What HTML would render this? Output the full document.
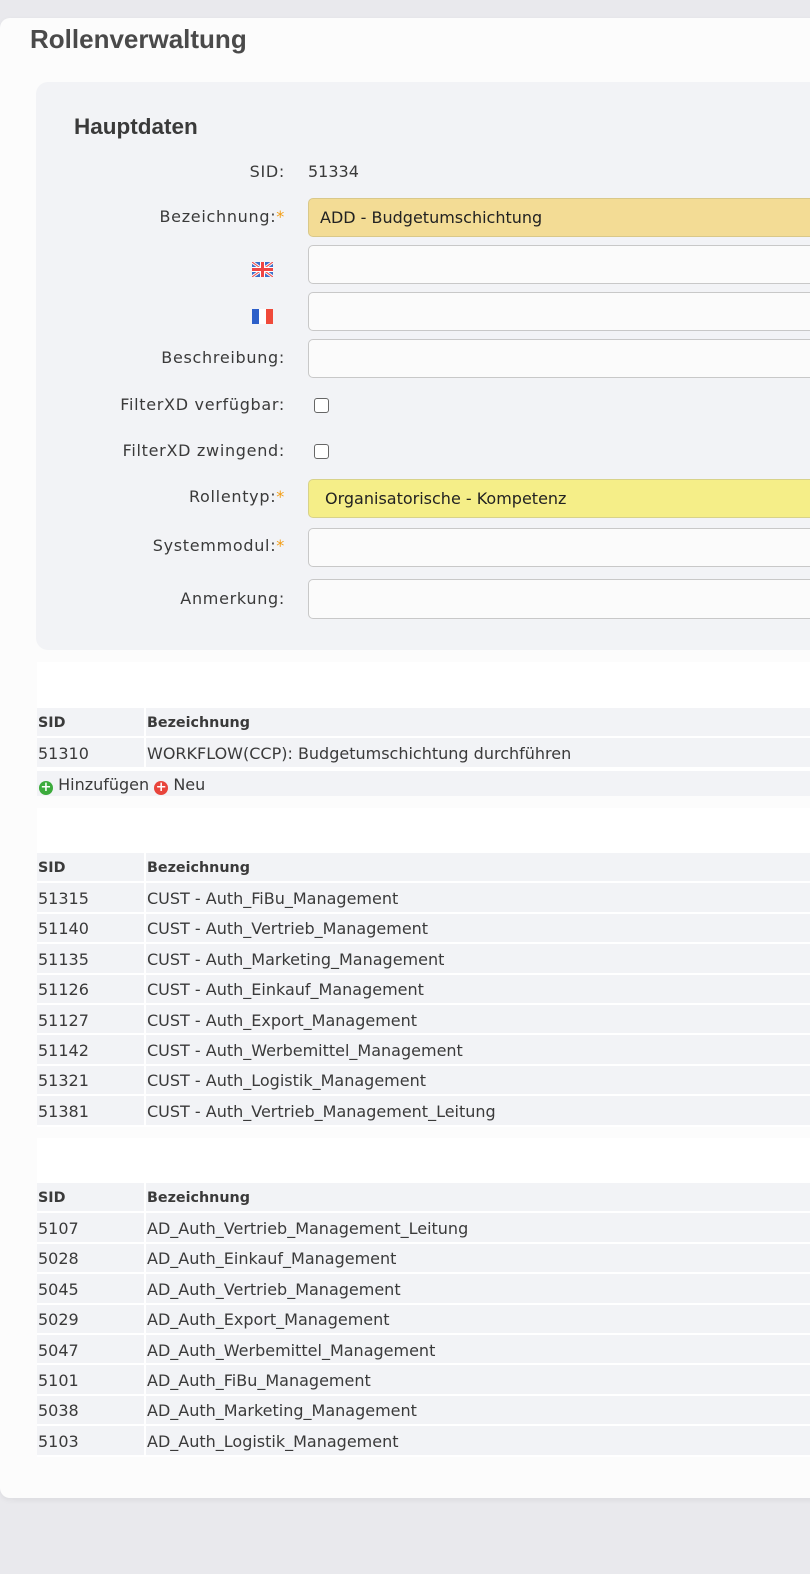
<!DOCTYPE html>
<html><head><meta charset="utf-8"><style>
*{box-sizing:border-box;margin:0;padding:0}
body{width:810px;height:1574px;background:#e9e9ed;font-family:"DejaVu Sans","Liberation Sans",sans-serif;color:#3a3a3a;position:relative;overflow:hidden}
.card{position:absolute;left:0;top:18px;width:830px;height:1480px;background:#fcfcfc;border-radius:10px;box-shadow:0 2px 6px rgba(0,0,0,.06)}
h1{position:absolute;left:30px;top:24px;font-family:"Liberation Sans",sans-serif;font-weight:bold;font-size:26px;color:#4a4a4a}
.panel{position:absolute;left:36px;top:82px;width:800px;height:568px;background:#f2f3f6;border-radius:12px}
h2{position:absolute;left:74px;top:114px;font-family:"Liberation Sans",sans-serif;font-weight:bold;font-size:22.5px;color:#3a3a3a}
.lbl{position:absolute;right:525px;font-size:16px;letter-spacing:0.7px;color:#3a3a3a;white-space:nowrap;line-height:20px}
.req{color:#f39c12}
.inp{position:absolute;left:308px;width:520px;height:39px;border:1.5px solid #c8c8c8;border-radius:5px;background:#fbfbfb;font-size:16px;line-height:37px;padding-left:11px;color:#222}
.cb{position:absolute;left:314px;width:15px;height:15px;border:1.5px solid #666;border-radius:3px;background:#fff}
.flag{position:absolute;left:252px;width:21px;height:15px}
.sec{position:absolute;left:37px;width:780px;background:#fff}
table{position:absolute;left:37px;width:780px;border-collapse:separate;border-spacing:0}
td{background:#f2f3f6;height:30.4px;font-size:16px;color:#3a3a3a;border-bottom:2px solid #fff;padding:2px 0 0 1px}
td.c1{width:109px;border-right:2px solid #fff}
td.h{font-weight:bold;font-size:14.3px;font-family:"DejaVu Sans",sans-serif}
.add{position:absolute;left:37px;top:771px;width:780px;height:25px;background:#f2f3f6;font-size:16px;line-height:27px;padding-left:2px}
.ic{display:inline-block;width:14px;height:14px;border-radius:50%;color:#fff;font-size:13px;line-height:14px;text-align:center;font-weight:bold;vertical-align:-1px}
</style></head><body>
<div class="card"></div>
<h1>Rollenverwaltung</h1>
<div class="panel"></div>
<h2>Hauptdaten</h2>
<div class="lbl" style="top:162px">SID:</div>
<div style="position:absolute;left:308px;top:162px;font-size:16px">51334</div>
<div class="lbl" style="top:207px">Bezeichnung:<span class="req">*</span></div>
<div class="inp" style="top:198px;background:#f3dc95;border-color:#d9c88a">ADD - Budgetumschichtung</div>
<svg class="flag" style="top:262px" viewBox="0 0 21 15"><rect width="21" height="15" fill="#3d6fc9"/><path d="M0 0L21 15M21 0L0 15" stroke="#fff" stroke-width="3"/><path d="M0 0L21 15M21 0L0 15" stroke="#e55" stroke-width="1.2"/><path d="M10.5 0V15M0 7.5H21" stroke="#fff" stroke-width="5"/><path d="M10.5 0V15M0 7.5H21" stroke="#e44" stroke-width="3"/></svg>
<div class="inp" style="top:245px"></div>
<svg class="flag" style="top:309px" viewBox="0 0 21 15"><rect width="7" height="15" fill="#2d5fc9"/><rect x="7" width="7" height="15" fill="#fff"/><rect x="14" width="7" height="15" fill="#f04a3a"/></svg>
<div class="inp" style="top:292px"></div>
<div class="lbl" style="top:348px">Beschreibung:</div>
<div class="inp" style="top:339px"></div>
<div class="lbl" style="top:395px">FilterXD verfügbar:</div>
<div class="cb" style="top:398px"></div>
<div class="lbl" style="top:441px">FilterXD zwingend:</div>
<div class="cb" style="top:444px"></div>
<div class="lbl" style="top:487px">Rollentyp:<span class="req">*</span></div>
<div class="inp" style="top:479px;background:#f5ee88;border-color:#d8d28a;padding-left:16px">Organisatorische - Kompetenz</div>
<div class="lbl" style="top:536px">Systemmodul:<span class="req">*</span></div>
<div class="inp" style="top:528px"></div>
<div class="lbl" style="top:589px">Anmerkung:</div>
<div class="inp" style="top:579px;height:40px"></div>

<div class="sec" style="top:662px;height:134px"></div>
<table style="top:708px">
<tr><td class="c1 h">SID</td><td class="h">Bezeichnung</td></tr>
<tr><td class="c1">51310</td><td>WORKFLOW(CCP): Budgetumschichtung durchführen</td></tr>
</table>
<div class="add"><span class="ic" style="background:#3cab3c">+</span> Hinzufügen <span class="ic" style="background:#e8453c">+</span> Neu</div>

<div class="sec" style="top:808px;height:316px"></div>
<table style="top:853px">
<tr><td class="c1 h">SID</td><td class="h">Bezeichnung</td></tr>
<tr><td class="c1">51315</td><td>CUST - Auth_FiBu_Management</td></tr>
<tr><td class="c1">51140</td><td>CUST - Auth_Vertrieb_Management</td></tr>
<tr><td class="c1">51135</td><td>CUST - Auth_Marketing_Management</td></tr>
<tr><td class="c1">51126</td><td>CUST - Auth_Einkauf_Management</td></tr>
<tr><td class="c1">51127</td><td>CUST - Auth_Export_Management</td></tr>
<tr><td class="c1">51142</td><td>CUST - Auth_Werbemittel_Management</td></tr>
<tr><td class="c1">51321</td><td>CUST - Auth_Logistik_Management</td></tr>
<tr><td class="c1">51381</td><td>CUST - Auth_Vertrieb_Management_Leitung</td></tr>
</table>

<div class="sec" style="top:1138px;height:316px"></div>
<table style="top:1183px">
<tr><td class="c1 h">SID</td><td class="h">Bezeichnung</td></tr>
<tr><td class="c1">5107</td><td>AD_Auth_Vertrieb_Management_Leitung</td></tr>
<tr><td class="c1">5028</td><td>AD_Auth_Einkauf_Management</td></tr>
<tr><td class="c1">5045</td><td>AD_Auth_Vertrieb_Management</td></tr>
<tr><td class="c1">5029</td><td>AD_Auth_Export_Management</td></tr>
<tr><td class="c1">5047</td><td>AD_Auth_Werbemittel_Management</td></tr>
<tr><td class="c1">5101</td><td>AD_Auth_FiBu_Management</td></tr>
<tr><td class="c1">5038</td><td>AD_Auth_Marketing_Management</td></tr>
<tr><td class="c1">5103</td><td>AD_Auth_Logistik_Management</td></tr>
</table>
</body></html>
